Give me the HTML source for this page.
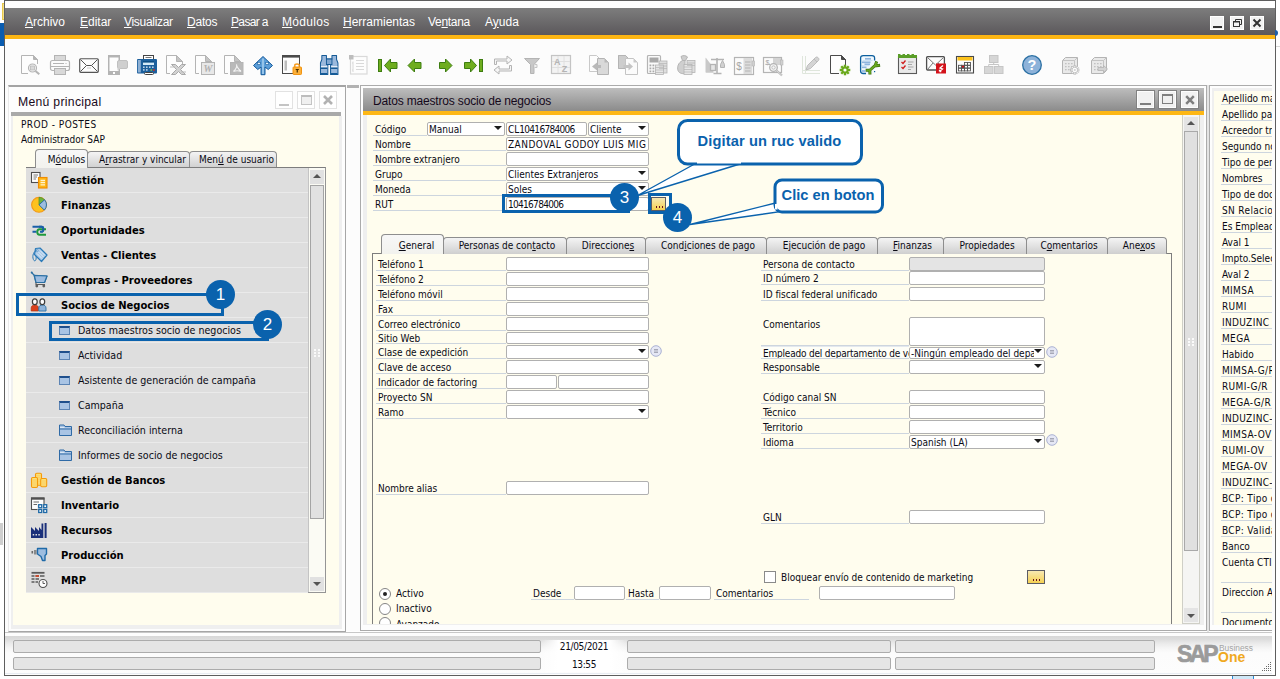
<!DOCTYPE html>
<html lang="es"><head><meta charset="utf-8"><title>SAP Business One</title>
<style>
html,body{margin:0;padding:0}
body{width:1280px;height:679px;overflow:hidden;background:#fff;position:relative;font-family:"DejaVu Sans Condensed","Liberation Sans",sans-serif;font-size:10px;color:#000}
div,span{box-sizing:border-box}
.a{position:absolute}
.t{position:absolute;white-space:nowrap;font-size:10px;line-height:12px;color:#0a0a14}
.lb{position:absolute;white-space:nowrap;font-size:10px;line-height:15px;height:14px;border-bottom:1px solid #cdd5de;padding-left:2px;color:#0a0a14;overflow:hidden}
.in{position:absolute;background:#fff;border:1px solid #b0b0b0;border-radius:2px;height:13px;font-size:10px;line-height:13px;padding-left:1px;white-space:nowrap;overflow:hidden;color:#0a0a14}
.in.g{background:#e4e4e4}
.dd:after{content:"";position:absolute;right:2px;top:3px;border-left:4px solid transparent;border-right:4px solid transparent;border-top:4.5px solid #1c1c1c}
.n{letter-spacing:-0.7px}
.c{letter-spacing:0.45px}
.u{text-decoration:underline}
/* main frame */
#menubar{left:5px;top:8px;width:1270px;height:27px;background:linear-gradient(#7d7d7d,#5b585b)}
#menubar span{position:absolute;top:7px;color:#fff;font-family:"Liberation Sans",sans-serif;font-size:12px;line-height:14px;white-space:nowrap}
#gold{left:5px;top:35px;width:1270px;height:4px;background:#fbb514}
#tool{left:5px;top:39px;width:1270px;height:46px;background:#fcfcfc}
.wb{position:absolute;top:16px;width:14px;height:14px;background:#f2f2f2;border:1px solid #fff}
.wt{position:absolute;top:91px;width:18px;height:18px;background:#fff;border:1px solid #e2e2e2}
.wd{position:absolute;top:90px;width:19px;height:19px;background:#f1f1f1;border:1px solid #818181;box-shadow:inset 0 0 0 1px #fdfdfd}
/* menu list */
.row{position:absolute;left:26px;width:282px;height:25px;background:#dedede;border-bottom:1px solid #eaeaea}
.rt{position:absolute;left:35px;top:6px;font-family:"DejaVu Sans","Liberation Sans",sans-serif;font-weight:bold;font-size:10px;line-height:13px;white-space:nowrap;color:#000}
.st{position:absolute;left:52px;top:6px;font-size:10.6px;line-height:13px;white-space:nowrap;color:#0a0a14}
.si{position:absolute;left:33px;top:8px;width:11px;height:9px;background:#a9c4e4;border:1px solid #5c84b4;border-top:2px solid #1f4f8c}
.sf{position:absolute;left:33px;top:6px;width:13px;height:12px}
.tab{position:absolute;top:237px;height:17px;border:1px solid #8e8e8e;border-bottom:none;border-radius:4px 4px 0 0;background:linear-gradient(#f4f4f4,#cfcfcf);font-size:10px;line-height:15px;padding-left:4px;text-align:center;white-space:nowrap;color:#0a0a14}
.tab.on{top:234px;height:20px;background:linear-gradient(#f7f7f7,#f2f2ee);line-height:22px;padding-left:8px;z-index:2}
.rp{position:absolute;left:1220px;width:52px;height:14px;border-bottom:1px solid #cdd5de;font-size:10px;line-height:15px;padding-left:1px;white-space:nowrap;overflow:hidden;color:#0a0a14}
.sb{position:absolute;height:13px;background:#e5e5e5;border:1px solid #acacac;border-radius:2px}
.circ{position:absolute;width:29px;height:29px;border-radius:50%;background:#0a62ad;color:#fff;font-size:17px;line-height:29px;text-align:center;font-family:"Liberation Sans",sans-serif}
.hb{position:absolute;border:3px solid #0a62ad}
.ybtn{background:linear-gradient(#f7e8b2,#f6d152);border:1px solid #5c5c64}
.ybtn i{position:absolute;left:5px;top:7.5px;width:1.400px;height:2px;background:#6a0f1c;box-shadow:3px 0 0 #6a0f1c,6px 0 0 #6a0f1c}
.dd2:after{top:1px}

</style></head>
<body>
<!-- frame.html -->
<!-- outer window frame -->
<div class="a" style="left:4px;top:0;width:1272px;height:676px;border:1px solid #5e5e5e;background:#fff"></div>
<div class="a" style="left:2px;top:3px;width:2px;height:17px;background:#f4e08a;border:1px solid #e8c84a;border-right:none"></div>
<div class="a" style="left:0;top:23px;width:4px;height:23px;background:#0a5cb0"></div>
<div class="a" style="left:0;top:523px;width:3px;height:22px;background:#cecece"></div>
<div class="a" style="left:1276px;top:46px;width:4px;height:1px;background:#d8d8d8"></div>
<div class="a" style="left:1275px;top:30px;width:3px;height:6px;background:#1f5fa8;border-radius:0 3px 3px 0;z-index:3"></div>
<div class="a" style="left:1232px;top:676px;width:22px;height:4px;background:#cfe8f8;border:1px solid #2a8ad4;border-top:none"></div>
<div class="a" id="menubar">
<span style="left:20px"><span class="u" style="position:static">A</span>rchivo</span>
<span style="left:75px"><span class="u" style="position:static">E</span>ditar</span>
<span style="left:119px;letter-spacing:-0.3px"><span class="u" style="position:static">V</span>isualizar</span>
<span style="left:182px;letter-spacing:-0.2px"><span class="u" style="position:static">D</span>atos</span>
<span style="left:226px;letter-spacing:-0.65px"><span class="u" style="position:static">P</span>asar a</span>
<span style="left:277px;letter-spacing:0.3px"><span class="u" style="position:static">M</span>ódulos</span>
<span style="left:338px"><span class="u" style="position:static">H</span>erramientas</span>
<span style="left:423px;letter-spacing:-0.3px">Ve<span class="u" style="position:static">n</span>tana</span>
<span style="left:480px">A<span class="u" style="position:static">y</span>uda</span>
</div>
<div class="a" id="gold"></div>
<div class="a" id="tool"></div>
<!-- main window controls -->
<div class="wb" style="left:1210px"><div class="a" style="left:2px;top:9px;width:9px;height:2px;background:#333"></div></div>
<div class="wb" style="left:1230px"><svg class="a" style="left:0;top:0" width="12" height="12" viewBox="0 0 12 12"><path d="M4.5 4.5V2.5H10.5V7.5H8.5" fill="none" stroke="#333" stroke-width="1"/><rect x="2.5" y="4.5" width="6" height="5" fill="none" stroke="#333" stroke-width="1"/><path d="M2 5H9" stroke="#333" stroke-width="1"/></svg></div>
<div class="wb" style="left:1250px"><svg class="a" style="left:0;top:0" width="12" height="12" viewBox="0 0 12 12"><path d="M2.5 2.5L9.5 9.5M9.5 2.5L2.5 9.5" stroke="#333" stroke-width="2"/></svg></div>
<!-- workspace -->
<div class="a" style="left:5px;top:85px;width:1270px;height:546px;background:#fcfcfc"></div>
<!-- toolbar.html -->
<svg class="a" style="left:0;top:39px" width="1280" height="46" viewBox="0 39 1280 46">
<g transform="translate(21,55)"><path d="M0.5 18.5V0.5H12.5L16.5 4.5V9" fill="#fdfdfd" stroke="#b4b4b4"/><path d="M0.5 18.5H7" fill="none" stroke="#b4b4b4"/><path d="M12.5 0.5V4.5H16.5Z" fill="#b4b4b4" stroke="#b4b4b4"/><circle cx="11.5" cy="13" r="4" fill="#f4f4f4" stroke="#b4b4b4" stroke-width="1.2"/><rect x="9.5" y="11" width="4" height="4" fill="#d9d9d9" stroke="#b4b4b4" stroke-width="0.7"/><path d="M14.5 16L18.3 19.3" stroke="#b4b4b4" stroke-width="2"/></g>
<g transform="translate(50,55)"><rect x="4.5" y="0.5" width="11" height="6" fill="#d9d9d9" stroke="#b4b4b4"/><rect x="0.5" y="5.5" width="19" height="10" rx="2" fill="#fbfbfb" stroke="#b4b4b4" stroke-width="1.2"/><path d="M3 8.5H14M15.5 8.5H16.5M1 11.5H19" stroke="#b4b4b4"/><rect x="4.5" y="13.5" width="11" height="6" fill="#d9d9d9" stroke="#b4b4b4"/></g>
<g transform="translate(79,55)"><rect x="0.7" y="3.7" width="18.6" height="13.6" rx="1" fill="#fdfdfd" stroke="#555" stroke-width="1.15"/><path d="M1.5 4.5L7.5 10.5L1.5 16.5M18.5 4.5L12.5 10.5L18.5 16.5M7.5 10.5H12.5" fill="none" stroke="#555" stroke-width="1"/><path d="M8 13H12" stroke="#ccc"/></g>
<g transform="translate(108,55)"><rect x="0" y="0" width="12" height="20" fill="#b4b4b4"/><rect x="1.5" y="2.5" width="9" height="13.5" fill="#fdfdfd"/><rect x="5" y="17" width="2" height="2" fill="#fff"/><rect x="9.5" y="5.5" width="10" height="8" rx="1.5" fill="#cfcfcf" stroke="#c0c0c0"/><path d="M9.5 12V15.5L12.5 13.5Z" fill="#cfcfcf"/></g>
<g transform="translate(137,55)"><rect x="6.5" y="0.5" width="10" height="5" fill="#fff" stroke="#444"/><path d="M8.5 2.5H14.5" stroke="#777"/><rect x="0" y="4" width="20" height="14.5" rx="1" fill="#1c5f9c"/><rect x="0.8" y="5" width="3" height="12.5" fill="#8eb0d4"/><rect x="6" y="6" width="11" height="4" fill="#d4eaf7"/><rect x="6" y="6" width="11" height="1.6" fill="#0d4f86"/><g fill="#cfe2f2"><rect x="6" y="11.5" width="1.6" height="1.4"/><rect x="9" y="11.5" width="1.6" height="1.4"/><rect x="12" y="11.5" width="1.6" height="1.4"/><rect x="15" y="11.5" width="1.6" height="1.4"/><rect x="6" y="14.2" width="1.6" height="1.4"/><rect x="9" y="14.2" width="1.6" height="1.4"/></g><rect x="13.5" y="14.2" width="1.6" height="1.6" fill="#7ac143"/><rect x="16" y="14.2" width="1.6" height="1.6" fill="#e2231a"/><rect x="7.5" y="17.5" width="9" height="2" rx="1" fill="#fff" stroke="#444"/></g>
<g transform="translate(166,55)"><path d="M0.5 18.5V0.5H10.5L16.5 6.5V9" fill="#fdfdfd" stroke="#b4b4b4"/><path d="M0.5 18.5H4" fill="none" stroke="#b4b4b4"/><path d="M10.5 0.5V6.5H16.5Z" fill="#c4c4c4" stroke="#b4b4b4"/><path d="M5.5 9.5H9.5L12.5 12.5L15.5 9.5H19.5L14.5 14.5L19.5 19.5H15.5L12.5 16.5L9.5 19.5H5.5L10.5 14.5Z" fill="#d2d2d2" stroke="#a8a8a8"/><path d="M4 12H9M15 17H20" stroke="#bdbdbd"/></g>
<g transform="translate(195,55)"><path d="M0.5 18.5V0.5H10.5L16.5 6.5V9" fill="#fdfdfd" stroke="#b4b4b4"/><path d="M0.5 18.5H4" fill="none" stroke="#b4b4b4"/><path d="M10.5 0.5V6.5H16.5Z" fill="#c4c4c4" stroke="#b4b4b4"/><rect x="6.5" y="7.5" width="13" height="12" fill="#e8e8e8" stroke="#b4b4b4"/><text x="13" y="17" font-family="Liberation Serif,serif" font-style="italic" font-weight="bold" font-size="10" text-anchor="middle" fill="#b0b0b0">W</text></g>
<g transform="translate(224,55)"><path d="M0.5 18.5V0.5H10.5L16.5 6.5V9" fill="#fdfdfd" stroke="#b4b4b4"/><path d="M0.5 18.5H4" fill="none" stroke="#b4b4b4"/><path d="M10.5 0.5V6.5H16.5Z" fill="#c4c4c4" stroke="#b4b4b4"/><rect x="6.5" y="7.5" width="12.5" height="12" fill="#b9b9b9" stroke="#b4b4b4"/><path d="M12.5 9.5C13.5 12 12 14 9.5 16.5C12 15.5 14.5 15.5 17 16.5C14.5 14 12.5 12 12.5 9.5Z" fill="none" stroke="#f2f2f2" stroke-width="1.1"/></g>
<g transform="translate(253,56)"><path d="M10 0.500L19.500 9.500L15.200 13.500L12 11V18.700H8V11L4.800 13.500L0.500 9.500Z" fill="#5c9ed8" stroke="#145a9c" stroke-width="1" stroke-linejoin="round"/><path d="M10 2.500V18" stroke="#b5d8f3" stroke-width="1.300"/><rect x="4.300" y="6.300" width="3" height="2.200" fill="#eaf4fc" stroke="#145a9c" stroke-width="0.600"/><rect x="12.700" y="6.300" width="3" height="2.200" fill="#eaf4fc" stroke="#145a9c" stroke-width="0.600"/></g>
<g transform="translate(282,55)"><rect x="0.5" y="0.5" width="17" height="18" fill="#fdfdfd" stroke="#4a4a4a" stroke-width="1"/><rect x="0" y="0" width="18" height="2.6" fill="#4a4a4a"/><rect x="2.5" y="5.5" width="2.5" height="10" fill="#bdbdbd"/><path d="M12.8 12V10.2C12.8 8.6 17.2 8.6 17.2 10.2V12" fill="none" stroke="#f59a1b" stroke-width="1.4"/><rect x="11" y="12" width="8.5" height="7.5" rx="0.8" fill="#fbb03b" stroke="#f08c00" stroke-width="0.9"/><path d="M13.7 14.5H16.8M15.25 14.5V17.5" stroke="#4a3000" stroke-width="1.2"/></g>
<g transform="translate(320,55)"><g transform="scale(0.92,1)"><path d="M2 0.5H7V4H13V0.5H18V4.5L19.5 8V19.5H11.5V9.5H8.5V19.5H0.5V8L2 4.5Z" fill="#9bb9dc" stroke="#155a96" stroke-width="1.1" stroke-linejoin="round"/><rect x="7" y="4" width="6" height="5.5" fill="#7fa6d0" stroke="#155a96"/><path d="M1 11.8H8M12 11.8H19" stroke="#fff" stroke-width="1.2"/><path d="M1 13.3H8M12 13.3H19" stroke="#155a96" stroke-width="1.4"/><path d="M1 18.7H8M12 18.7H19" stroke="#155a96" stroke-width="1.6"/></g></g>
<g transform="translate(349,55)"><rect x="1.5" y="1.5" width="16.5" height="17.5" fill="#fdfdfd" stroke="#d9d9d9" stroke-width="1.2"/><rect x="0" y="0" width="4.5" height="4.5" fill="#bdbdbd"/><path d="M4 6.5V17M3 8H4M3 15H4" stroke="#d9d9d9"/><path d="M7 5.5H15M7 8.5H15M7 11.5H15M7 14.5H15" stroke="#d9d9d9" stroke-width="1"/></g>
<g transform="translate(378,55)"><rect x="0.5" y="4.5" width="3" height="12" fill="#6fad1f" stroke="#3d7d10"/><path d="M6.5 10.5L12.5 4V7.5H19V13.5H12.5V17Z" fill="#6fad1f" stroke="#3d7d10" stroke-linejoin="round"/></g>
<g transform="translate(407,55)"><path d="M1 10.5L7.5 4V7.5H14V13.5H7.5V17Z" fill="#6fad1f" stroke="#3d7d10" stroke-linejoin="round"/></g>
<g transform="translate(439,55)"><path d="M13 10.5L6.5 4V7.5H0.5V13.5H6.5V17Z" fill="#6fad1f" stroke="#3d7d10" stroke-linejoin="round"/></g>
<g transform="translate(464,55)"><path d="M12.5 10.5L6.5 4V7.5H0.5V13.5H6.5V17Z" fill="#6fad1f" stroke="#3d7d10" stroke-linejoin="round"/><rect x="15.5" y="4.5" width="3" height="12" fill="#6fad1f" stroke="#3d7d10"/></g>
<g transform="translate(493,55)"><path d="M1.5 9.5V4H14V1L19 5L14 9V6H3.5V9.5Z" fill="#f6f6f6" stroke="#b4b4b4" stroke-linejoin="round"/><path d="M18.5 10.5V16H6V19L1 15L6 11V14H16.5V10.5Z" fill="#f6f6f6" stroke="#b4b4b4" stroke-linejoin="round"/></g>
<g transform="translate(524,55)"><path d="M0.5 3.5H15.5L10 9.5V18.5H6.5V9.5Z" fill="#c8c8c8" stroke="#b4b4b4" stroke-linejoin="round"/><path d="M10.5 9.5H13V12.5H10.5" fill="#f0f0f0" stroke="#c4c4c4"/></g>
<g transform="translate(551,55)"><rect x="0.5" y="0.5" width="19" height="18" fill="#f3f3f3" stroke="#c4c4c4" stroke-width="1.2"/><path d="M1 6.5H19M1 12.5H19M7 1V18M13 1V18" stroke="#e0e0e0"/><text x="6.3" y="9.6" font-family="Liberation Sans,sans-serif" font-weight="bold" font-size="9" text-anchor="middle" fill="#b4b4b4">A</text><text x="13.5" y="17" font-family="Liberation Sans,sans-serif" font-weight="bold" font-size="9" text-anchor="middle" fill="#b4b4b4">Z</text></g>
<g transform="translate(589,55)"><path d="M0.5 16.5V0.5H7.5L10 3" fill="#fdfdfd" stroke="#c9c9c9"/><path d="M0.5 16.5H8" stroke="#c9c9c9" fill="none"/><path d="M8.5 19.5V3.5H15.5L19.5 7.5V19.5Z" fill="#d9d9d9" stroke="#b4b4b4"/><path d="M15.5 3.5V7.5H19.5Z" fill="#b9b9b9"/><path d="M3 11.5L8 7.5V10H12V13H8V15.5Z" fill="#b9b9b9"/></g>
<g transform="translate(618,55)"><path d="M0.5 13.5V0.5H7.5L10.5 3.5" fill="#d0d0d0" stroke="#b4b4b4"/><path d="M0.5 0.5H7.5L10 3V13.5H0.5Z" fill="#cdcdcd" stroke="#b4b4b4"/><path d="M7.5 19.5V3.5H15.5L19.5 7.5V19.5Z" fill="#fbfbfb" stroke="#c4c4c4"/><path d="M15.5 3.5V7.5H19.5Z" fill="#c9c9c9"/><path d="M15 11.5L10.5 7.5V10H5.5V13H10.5V15.5Z" fill="#c4c4c4"/></g>
<g transform="translate(647,55)"><rect x="0.5" y="0.5" width="13" height="18" rx="1" fill="#fbfbfb" stroke="#b4b4b4" stroke-width="1.2"/><rect x="2.5" y="2.5" width="9" height="5" fill="#a9a9a9"/><g fill="#a9a9a9"><rect x="2.5" y="9.5" width="1.8" height="1.8"/><rect x="5.5" y="9.5" width="1.8" height="1.8"/><rect x="2.5" y="12.5" width="1.8" height="1.8"/><rect x="5.5" y="12.5" width="1.8" height="1.8"/><rect x="2.5" y="15.5" width="1.8" height="1.8"/><rect x="5.5" y="15.5" width="1.8" height="1.8"/></g><rect x="12" y="6" width="8" height="12" fill="#dedede" stroke="#b4b4b4" stroke-width="0.8"/><rect x="8.5" y="10" width="8" height="9.5" fill="#e6e6e6" stroke="#b4b4b4" stroke-width="0.8"/><path d="M12 8.5H20M12 11H20M12 13.5H20M8.5 12.5H16.5M8.5 15H16.5M8.5 17.5H16.5" stroke="#b4b4b4" stroke-width="0.7"/></g>
<g transform="translate(677,55)"><path d="M4 1.5C6 0 9 0.5 10.5 2L8.5 5.5H5.5Z" fill="#cfcfcf" stroke="#b4b4b4"/><path d="M5.5 5.5C1 8 0 12 1 15.5C2 18.5 6 19 8 18.5V5.5Z" fill="#cfcfcf" stroke="#b4b4b4"/><rect x="10" y="5.500" width="8" height="12" fill="#dedede" stroke="#b4b4b4" stroke-width="0.8"/><rect x="7" y="9.5" width="8" height="10" fill="#e6e6e6" stroke="#b4b4b4" stroke-width="0.8"/><path d="M10 8H18M10 10.500H18M7 12H15M7 14.500H15M7 17H15" stroke="#b4b4b4" stroke-width="0.7"/></g>
<g transform="translate(705,55)"><path d="M0.500 2.500V17.500H9L0.500 2.500Z" fill="#c9c9c9"/><path d="M1 3L8 12V17.500H1Z" fill="#c9c9c9"/><path d="M12 3V18M8.500 18.500H16.500M6 4.500H19" stroke="#b4b4b4" stroke-width="1.600" fill="none"/><rect x="5.500" y="9.500" width="5" height="6" fill="#e6e6e6" stroke="#b4b4b4" stroke-width="1.300"/><path d="M15.500 9.500L17.500 5.500L19.500 9.500V12.500H15.500Z" fill="#d0d0d0" stroke="#b4b4b4"/></g>
<g transform="translate(734,56)"><rect x="0.500" y="1.500" width="19" height="17" fill="#fbfbfb" stroke="#b4b4b4" stroke-width="1.200"/><rect x="9.500" y="2" width="8.500" height="16" fill="#dcdcdc"/><rect x="18" y="5" width="2.500" height="5" fill="#d0d0d0" stroke="#b4b4b4" stroke-width="0.600"/><path d="M11 6H16.500M11 9H16.500M11 12H16.500M11 15H16.500" stroke="#b4b4b4"/><text x="5" y="13.500" font-family="Liberation Sans,sans-serif" font-size="10" text-anchor="middle" fill="#a4a4a4">$</text></g>
<g transform="translate(763,56)"><rect x="0.500" y="1.500" width="18" height="15" fill="#fbfbfb" stroke="#b4b4b4" stroke-width="1.200"/><rect x="10" y="2" width="8" height="7" fill="#d4d4d4"/><rect x="17.500" y="4" width="2.500" height="5" fill="#d0d0d0" stroke="#b4b4b4" stroke-width="0.600"/><text x="4.500" y="9" font-family="Liberation Sans,sans-serif" font-size="7" text-anchor="middle" fill="#a4a4a4">$</text><path d="M2.500 8.500H7" stroke="#b4b4b4"/><circle cx="10.500" cy="11.500" r="3.800" fill="#f6f6f6" stroke="#b4b4b4" stroke-width="1.300"/><circle cx="10.500" cy="11.500" r="1.700" fill="none" stroke="#b4b4b4" stroke-width="0.800"/><path d="M13.500 14.500L19 19.500" stroke="#b4b4b4" stroke-width="2"/><path d="M13.500 14.500L19 19.500" stroke="#f0f0f0" stroke-width="0.600"/></g>
<g transform="translate(802,55)"><path d="M0.500 1V18.500H18M3.500 1V18.500M0.500 15.500H18" stroke="#dfe6dc" fill="none"/><path d="M4 15L5.500 10.500L13.500 2.500C15 1 18 3.500 16.500 5.500L8.500 13.500Z" fill="#d4d4d4" stroke="#bdbdbd" stroke-linejoin="round"/><path d="M12 4L15 7" stroke="#bdbdbd"/></g>
<g transform="translate(830,55)"><path d="M0.500 18.500V0.500H11.500L15.500 4.500V10" fill="#fdfdfd" stroke="#4a4a4a"/><path d="M0.500 18.500H9" stroke="#4a4a4a" fill="none"/><path d="M11.500 0.500V4.500H15.500Z" fill="#4a4a4a" stroke="#4a4a4a"/><g transform="translate(15,15)"><rect x="-1.200" y="-5.300" width="2.400" height="10.600" fill="#6aa91c" transform="rotate(0)"/><rect x="-1.200" y="-5.300" width="2.400" height="10.600" fill="#6aa91c" transform="rotate(45)"/><rect x="-1.200" y="-5.300" width="2.400" height="10.600" fill="#6aa91c" transform="rotate(90)"/><rect x="-1.200" y="-5.300" width="2.400" height="10.600" fill="#6aa91c" transform="rotate(135)"/><circle r="3.600" fill="#6aa91c"/><circle r="1.600" fill="#fdfdfd"/></g></g>
<g transform="translate(860,55)"><path d="M0.600 3.200Q0.600 0.600 3.200 0.600H12Q14.600 0.600 14.600 3.200V17.500Q14.600 18.500 13 18.500H3.200Q0.600 18.500 0.600 16Z" fill="#f1f8fd"/><g stroke="#8fb5de" stroke-width="1.700"><path d="M5 3.800H11"/><path d="M2 7.300H10.500"/><path d="M4.500 9.300H10"/><path d="M2 12.300H6.500"/><path d="M2 16H5.500"/></g><path d="M2.500 5.500H12.500M1.500 10.700H9" stroke="#cfe3f5" stroke-width="1.200"/><path d="M14.600 5.500V3.200Q14.600 0.600 12 0.600H3.200Q0.600 0.600 0.600 3.200V16Q0.600 18.500 3.200 18.500H6" fill="none" stroke="#0d5f9e" stroke-width="1.300"/><path d="M9.500 15.500L15.500 10.200M15.200 10.500L16.200 7.800M15.600 10.800L18.600 10.400M9.800 15.200L7.200 15.300M9.800 15.600L9.900 18" fill="none" stroke="#3d7010" stroke-width="3" stroke-linecap="square"/><path d="M9.500 15.500L15.500 10.200M15.200 10.500L16.200 7.800M15.600 10.800L18.600 10.400M9.800 15.200L7.200 15.300M9.800 15.600L9.900 18" fill="none" stroke="#69a81e" stroke-width="1.800" stroke-linecap="square"/><rect x="14" y="16" width="1.200" height="1.200" fill="#0d5f9e"/></g>
<g transform="translate(898,54)"><rect x="0.500" y="2.500" width="18" height="17" fill="#e9e9e9" stroke="#5a5a5a" stroke-width="1.100"/><path d="M0 0H2.500V1H4.500V0H7V1H9V0H11.500V1H13.500V0H16V1H19V4H0Z" fill="#5a9e28"/><path d="M3.500 8L5 9.500L7.500 6.500M3.500 13L5 14.500L7.500 11.500" fill="none" stroke="#d01c1c" stroke-width="1.300"/><path d="M10 8H15.500M10 10.500H14M10 13H15.500M10 15.500H13" stroke="#a8a8a8" stroke-width="1.100"/></g>
<g transform="translate(926,55)"><rect x="0.600" y="1.600" width="17.800" height="13.400" rx="1" fill="#fdfdfd" stroke="#4f4f4f" stroke-width="1.300"/><path d="M1.500 2.500L9.500 10L17.500 2.500M1.500 14.500L7 8M17.500 14.500L12 8" fill="none" stroke="#6a6a6a" stroke-width="0.900"/><rect x="10" y="8.500" width="10" height="10" fill="#d3131b"/><path d="M17 10.500L14 13L16.500 14L13.500 16.500M13.500 16.500V14.700M13.500 16.500H15.300" fill="none" stroke="#fff" stroke-width="1.300"/></g>
<g transform="translate(956,55)"><rect x="0.500" y="1.500" width="17" height="16.500" fill="#fdfdfd" stroke="#4a4a4a" stroke-width="1.100"/><rect x="1.500" y="2" width="15" height="3.500" fill="#fcc21c"/><g fill="none" stroke="#555" stroke-width="0.900"><rect x="8.500" y="7.500" width="3" height="2.800"/><rect x="11.500" y="7.500" width="3" height="2.800"/><rect x="2.500" y="10.300" width="3" height="2.800"/><rect x="5.500" y="10.300" width="3" height="2.800" fill="#d3131b"/><rect x="8.500" y="10.300" width="3" height="2.800"/><rect x="11.500" y="10.300" width="3" height="2.800"/><rect x="2.500" y="13.100" width="3" height="2.800"/><rect x="5.500" y="13.100" width="3" height="2.800"/><rect x="8.500" y="13.100" width="3" height="2.800"/><rect x="11.500" y="13.100" width="3" height="2.800"/></g></g>
<g transform="translate(984,55)"><rect x="5.500" y="0.500" width="8.500" height="7" fill="#d6d6d6" stroke="#c6c6c6"/><rect x="0.500" y="11.500" width="8.500" height="7" fill="#d6d6d6" stroke="#c6c6c6"/><rect x="10.500" y="11.500" width="8.500" height="7" fill="#d6d6d6" stroke="#c6c6c6"/><path d="M9.700 7.500V9.500M4.700 11.500V9.500H14.700V11.500" fill="none" stroke="#c6c6c6"/></g>
<g transform="translate(1022,55)"><circle cx="10" cy="10" r="9.300" fill="#8db2d9" stroke="#2a6fa3" stroke-width="1.300"/><text x="10" y="15.200" font-family="Liberation Sans,sans-serif" font-weight="bold" font-size="14.500" text-anchor="middle" fill="#fff">?</text></g>
<g transform="translate(1062,56)"><path d="M0.500 4.500L3.500 1.500H15.500V14.500L12.500 17.500H0.500Z" fill="#e9e9e9" stroke="#b4b4b4" stroke-linejoin="round"/><path d="M0.500 4.500H12.500V17.500M12.500 4.500L15.500 1.500" fill="none" stroke="#c4c4c4"/><g fill="#c2c2c2"><rect x="3" y="7" width="1.600" height="1.300"/><rect x="6" y="7" width="1.600" height="1.300"/><rect x="9" y="7" width="1.600" height="1.300"/><rect x="3" y="10" width="1.600" height="1.300"/><rect x="6" y="10" width="1.600" height="1.300"/><rect x="9" y="10" width="1.600" height="1.300"/><rect x="3" y="13" width="1.600" height="1.300"/><rect x="6" y="13" width="1.600" height="1.300"/></g><g transform="translate(12.800,14)"><rect x="-1" y="-4.200" width="2" height="8.400" fill="#fdfdfd" stroke="#b4b4b4" stroke-width="0.700" transform="rotate(0)"/><rect x="-1" y="-4.200" width="2" height="8.400" fill="#fdfdfd" stroke="#b4b4b4" stroke-width="0.700" transform="rotate(45)"/><rect x="-1" y="-4.200" width="2" height="8.400" fill="#fdfdfd" stroke="#b4b4b4" stroke-width="0.700" transform="rotate(90)"/><rect x="-1" y="-4.200" width="2" height="8.400" fill="#fdfdfd" stroke="#b4b4b4" stroke-width="0.700" transform="rotate(135)"/><circle r="2.800" fill="#fdfdfd" stroke="#b4b4b4" stroke-width="0.700"/><circle r="1.100" fill="#d0d0d0"/></g></g>
<g transform="translate(1091,56)"><path d="M0.500 4.500L3.500 1.500H15.500V14.500L12.500 17.500H0.500Z" fill="#e9e9e9" stroke="#b4b4b4" stroke-linejoin="round"/><path d="M0.500 4.500H12.500V17.500M12.500 4.500L15.500 1.500" fill="none" stroke="#c4c4c4"/><g fill="#c2c2c2"><rect x="3" y="7" width="1.600" height="1.300"/><rect x="6" y="7" width="1.600" height="1.300"/><rect x="9" y="7" width="1.600" height="1.300"/><rect x="3" y="10" width="1.600" height="1.300"/><rect x="6" y="10" width="1.600" height="1.300"/><rect x="9" y="10" width="1.600" height="1.300"/><rect x="3" y="13" width="1.600" height="1.300"/><rect x="6" y="13" width="1.600" height="1.300"/></g><path d="M7 11.500H12.500V9.500L16.500 13L12.500 16.500V14.500H7Z" fill="#d4d4d4" stroke="#b4b4b4" stroke-width="0.800" stroke-linejoin="round"/></g>
</svg>
<!-- menu.html -->
<div class="a" style="left:8px;top:85px;width:338px;height:547px;background:#fdfdfd;border-left:1px solid #e9e9e9;border-right:1px solid #a6a6a6;border-top:2px solid #a4a4a4;border-bottom:1px solid #a6a6a6"></div>
<div class="a" style="left:11px;top:116px;width:331px;height:513px;background:#efefef"></div>
<div class="a" style="left:347px;top:85px;width:12px;height:3px;background:#b2b2b2"></div>
<div class="a" style="left:11px;top:87px;width:330px;height:25px;background:#fdfdfd"></div>
<div class="t" style="left:18px;top:95px;font-family:Liberation Sans,sans-serif;font-size:12.2px;letter-spacing:0.3px;line-height:14px;color:#1a0a1a">Menú principal</div>
<div class="a" style="left:11px;top:112px;width:330px;height:4px;background:#a9a9a9"></div>
<div class="wt" style="left:275px"><div class="a" style="left:3px;top:12px;width:10px;height:2px;background:#c4c4c4"></div></div>
<div class="wt" style="left:297px"><div class="a" style="left:3px;top:3px;width:11px;height:10px;border:1px solid #c4c4c4;border-top:2px solid #bdbdbd;background:#f0f0f0"></div></div>
<div class="wt" style="left:319px"><svg class="a" style="left:3px;top:3px" width="10" height="10" viewBox="0 0 10 10"><path d="M1 1L9 9M9 1L1 9" stroke="#b2b2b2" stroke-width="2.600"/></svg></div>
<div class="a" style="left:13px;top:116px;width:326px;height:509px;background:#fffdee"></div>
<div class="t" style="left:21px;top:119px;letter-spacing:0.45px">PROD - POSTES</div>
<div class="t" style="left:21px;top:134px;">Administrador SAP</div>
<div class="tab" style="left:87px;top:151px;width:103px;height:17px;padding-left:8px;line-height:15px">A<span class="u">r</span>rastrar y vincular</div>
<div class="tab" style="left:189px;top:151px;width:88px;height:17px;padding-left:7px;line-height:15px">Men<span class="u">ú</span> de usuario</div>
<div class="tab on" style="left:35px;top:149px;width:53px;height:19px;line-height:19px;padding-left:10px">M<span class="u">ó</span>dulos</div>
<div class="a" style="left:26px;top:167px;width:300px;height:426px;background:#dedede;border-top:1px solid #7d7d7d;border-right:1px solid #959595;border-bottom:1px solid #959595"></div>
<div class="row" style="top:168px">
<svg class="a" style="left:0;top:0" width="26" height="25" viewBox="0 0 26 25"><rect x="5.500" y="4.500" width="8.500" height="10" fill="#fdfdfd" stroke="#4f4f4f" stroke-width="1.100"/><path d="M7.500 7H12M7.500 9H11M7.500 11H10" stroke="#6a6a6a" stroke-width="0.900"/><rect x="12.500" y="9.500" width="8.500" height="10.500" fill="#fdb515" stroke="#f08c00" stroke-width="1.100"/><path d="M14.500 12.500H19M14.500 14.700H19M14.500 16.900H19" stroke="#fff4cf" stroke-width="1.300"/></svg><div class="rt">Gestión</div>
</div>

<div class="row" style="top:193px">
<svg class="a" style="left:0;top:0" width="26" height="25" viewBox="0 0 26 25"><circle cx="13" cy="11.800" r="7.400" fill="#fdc21e" stroke="#f29a1c" stroke-width="1.100"/><path d="M13 11.800V4.300A7.500 7.500 0 0 1 18.600 6.800Z" fill="#6db33f" stroke="#4c8f2a" stroke-width="0.700"/><path d="M13 11.800L18.600 6.800A7.500 7.500 0 0 1 18.300 17.100Z" fill="#9dbde0" stroke="#2a6fa3" stroke-width="1"/></svg><div class="rt">Finanzas</div>
</div>

<div class="row" style="top:218px">
<svg class="a" style="left:0;top:0" width="26" height="25" viewBox="0 0 26 25"><path d="M6.500 8.700H15.500C18 8.700 18 13.700 15.500 13.700H14M6.500 13.700H10.500" fill="none" stroke="#1a5fa8" stroke-width="1.900"/><path d="M20 11.300H13.500C10.500 11.300 10.500 16.800 13.500 16.800H20" fill="none" stroke="#1f9a3c" stroke-width="1.900"/><path d="M13 8.700H15.500C18 8.700 18 13.700 15.500 13.700" fill="none" stroke="#1a5fa8" stroke-width="1.900"/></svg><div class="rt">Oportunidades</div>
</div>

<div class="row" style="top:243px">
<svg class="a" style="left:0;top:0" width="26" height="25" viewBox="0 0 26 25"><path d="M9.500 5.500L14 5L21 12L15.500 18.500L8.500 11.500Z" fill="#a9c8e6" stroke="#2a7ab8" stroke-width="1.200" stroke-linejoin="round"/><path d="M12.500 9L17.500 14M11 10.500L16 15.500M14 7.500L19 12.500" stroke="#e8f2fb" stroke-width="0.900"/><circle cx="11" cy="7.500" r="1" fill="#fff" stroke="#2a7ab8" stroke-width="0.600"/><path d="M10.500 7.500C6.500 9 6 15 8 17.500C10 19 10.500 15 10 13" fill="none" stroke="#2a7ab8" stroke-width="1"/></svg><div class="rt">Ventas - Clientes</div>
</div>

<div class="row" style="top:268px">
<svg class="a" style="left:0;top:0" width="26" height="25" viewBox="0 0 26 25"><path d="M5.500 4.500L8 7L10 14.500H18.500L21 8L8.300 7.300" fill="#9cbce0" stroke="#2a6fa3" stroke-width="1.200" stroke-linejoin="round"/><path d="M8.300 7.300L21 8L18.500 14.500H10Z" fill="#9cbce0" stroke="#2a6fa3" stroke-width="1.200" stroke-linejoin="round"/><circle cx="5.700" cy="4.500" r="1" fill="#2a6fa3"/><path d="M10 14.500V16.500H19" fill="none" stroke="#5a5a5a" stroke-width="1.100"/><circle cx="10.800" cy="18" r="1.400" fill="#5f5f5f"/><circle cx="17.800" cy="18" r="1.400" fill="#5f5f5f"/></svg><div class="rt">Compras - Proveedores</div>
</div>

<div class="row" style="top:293px">
<svg class="a" style="left:0;top:0" width="26" height="25" viewBox="0 0 26 25"><path d="M5.200 18V15C5.200 12.800 7 12 8.800 12C10.600 12 12.400 12.800 12.400 15V18Z" fill="#d9411e" stroke="#b5300f" stroke-width="0.700"/><path d="M12.800 18V15C12.800 12.800 14.600 12 16.400 12C18.200 12 20 12.800 20 15V18Z" fill="#8fb3d9" stroke="#2a6fa3" stroke-width="0.900"/><ellipse cx="8.800" cy="8.800" rx="2.400" ry="2.900" fill="#fdfdfd" stroke="#3c3c3c" stroke-width="1.200"/><ellipse cx="16.300" cy="8.800" rx="2.400" ry="2.900" fill="#fdfdfd" stroke="#3c3c3c" stroke-width="1.200"/></svg><div class="rt">Socios de Negocios</div>
</div>

<div class="row" style="top:318px">
<div class="si"></div><div class="st">Datos maestros socio de negocios</div>
</div>

<div class="row" style="top:343px">
<div class="si"></div><div class="st">Actividad</div>
</div>

<div class="row" style="top:368px">
<div class="si"></div><div class="st">Asistente de generación de campaña</div>
</div>

<div class="row" style="top:393px">
<div class="si"></div><div class="st">Campaña</div>
</div>

<div class="row" style="top:418px">
<svg class="sf" viewBox="0 0 13 12"><path d="M0.500 1H5L6 2.500H12.500V11.500H0.500Z" fill="#a9c4e4" stroke="#2f6aa6"/><path d="M1 5H12" stroke="#2f6aa6"/><path d="M1 3.500H5.500" stroke="#dbe8f5"/></svg><div class="st">Reconciliación interna</div>
</div>

<div class="row" style="top:443px">
<svg class="sf" viewBox="0 0 13 12"><path d="M0.500 1H5L6 2.500H12.500V11.500H0.500Z" fill="#a9c4e4" stroke="#2f6aa6"/><path d="M1 5H12" stroke="#2f6aa6"/><path d="M1 3.500H5.500" stroke="#dbe8f5"/></svg><div class="st">Informes de socio de negocios</div>
</div>

<div class="row" style="top:468px">
<svg class="a" style="left:0;top:0" width="26" height="25" viewBox="0 0 26 25"><rect x="9.5" y="5.3" width="6" height="12" rx="1.200" fill="#fde272" stroke="#f59a0a" stroke-width="1.100"/><path d="M10.2 7.8H14.8" stroke="#f9c566" stroke-width="0.800"/><path d="M10.2 9.8H14.8" stroke="#f9c566" stroke-width="0.800"/><path d="M10.2 11.8H14.8" stroke="#f9c566" stroke-width="0.800"/><path d="M10.2 13.8H14.8" stroke="#f9c566" stroke-width="0.800"/><path d="M10.2 15.8H14.8" stroke="#f9c566" stroke-width="0.800"/><rect x="5.5" y="9.5" width="6" height="10" rx="1.200" fill="#fde272" stroke="#f59a0a" stroke-width="1.100"/><path d="M6.2 12H10.8" stroke="#f9c566" stroke-width="0.800"/><path d="M6.2 14H10.8" stroke="#f9c566" stroke-width="0.800"/><path d="M6.2 16H10.8" stroke="#f9c566" stroke-width="0.800"/><path d="M6.2 18H10.8" stroke="#f9c566" stroke-width="0.800"/><rect x="14.7" y="10.5" width="6" height="8.2" rx="1.200" fill="#fde272" stroke="#f59a0a" stroke-width="1.100"/><path d="M15.399999999999999 13H20.0" stroke="#f9c566" stroke-width="0.800"/><path d="M15.399999999999999 15H20.0" stroke="#f9c566" stroke-width="0.800"/><path d="M15.399999999999999 17H20.0" stroke="#f9c566" stroke-width="0.800"/></svg><div class="rt">Gestión de Bancos</div>
</div>

<div class="row" style="top:493px">
<svg class="a" style="left:0;top:0" width="26" height="25" viewBox="0 0 26 25"><rect x="5.500" y="5" width="12.500" height="11.500" fill="#fdfdfd" stroke="#4f4f4f" stroke-width="1.100"/><rect x="5" y="4.500" width="13.500" height="2.200" fill="#4f4f4f"/><path d="M7.500 9H13M7.500 11.500H11" stroke="#6a6a6a" stroke-width="1"/><rect x="11.500" y="11" width="10" height="9.500" fill="#dedede"/><g fill="#fdfdfd" stroke="#1f6aa8" stroke-width="1.300"><rect x="12.700" y="11.700" width="3" height="3"/><rect x="17.700" y="11.700" width="3" height="3"/><rect x="12.700" y="16.500" width="3" height="3"/><rect x="17.700" y="16.500" width="3" height="3"/></g></svg><div class="rt">Inventario</div>
</div>

<div class="row" style="top:518px">
<svg class="a" style="left:0;top:0" width="26" height="25" viewBox="0 0 26 25"><path d="M5 20V9L9 13V9L13 13V9L15.500 12V5.500H17.300V20Z" fill="#1a2f7a"/><rect x="18.600" y="5" width="2" height="15" fill="#1a2f7a"/><g fill="#dedede"><rect x="6.700" y="16" width="1.500" height="1.500"/><rect x="9.500" y="16" width="1.500" height="1.500"/><rect x="12.300" y="16" width="1.500" height="1.500"/></g></svg><div class="rt">Recursos</div>
</div>

<div class="row" style="top:543px">
<svg class="a" style="left:0;top:0" width="26" height="25" viewBox="0 0 26 25"><rect x="5.500" y="8" width="1.600" height="2.500" fill="#6a6a6a"/><rect x="8" y="7" width="2.600" height="4.500" fill="#8a8a8a"/><path d="M11.500 5.500H20.500V11L19 12.500V17.500H16.500L15 13.500L11.500 11Z" fill="#9dbde0" stroke="#1f6aa8" stroke-width="1.400" stroke-linejoin="round"/></svg><div class="rt">Producción</div>
</div>

<div class="row" style="top:568px">
<svg class="a" style="left:0;top:0" width="26" height="25" viewBox="0 0 26 25"><path d="M5.500 4.800H18.500" stroke="#5a5a5a" stroke-width="1.800"/><path d="M5.500 8H8.500M9.500 8H13M14 8H18.500M5.500 11H8.500M9.500 11H13M5.500 14H8.500M9.500 14H12" stroke="#5a5a5a" stroke-width="1.500"/><path d="M9.500 8H13" stroke="#d9411e" stroke-width="1.600"/><circle cx="17" cy="15.500" r="4" fill="#fdfdfd" stroke="#4f4f4f" stroke-width="1.100"/><path d="M17 13V15.500H19" fill="none" stroke="#4f4f4f" stroke-width="0.900"/></svg><div class="rt">MRP</div>
</div>

<div class="a" style="left:308px;top:168px;width:17px;height:424px;background:#fbfbf4;border-left:1px solid #c4c4c4"></div>
<div class="a" style="left:310px;top:170px;width:14px;height:14px;background:#e1e1e1"><div class="a" style="left:2.500px;top:4px;border-left:4.500px solid transparent;border-right:4.500px solid transparent;border-bottom:4.500px solid #555"></div></div>
<div class="a" style="left:310px;top:185px;width:14px;height:334px;background:#e1e1e1;border:1px solid #a4a4a4"></div>
<div class="a" style="left:310px;top:577px;width:14px;height:14px;background:#e1e1e1"><div class="a" style="left:2.500px;top:5px;border-left:4.500px solid transparent;border-right:4.500px solid transparent;border-top:4.500px solid #555"></div></div>
<svg class="a" style="left:313px;top:348px" width="8" height="10" viewBox="0 0 8 10"><g fill="#fafafa"><rect x="1" y="1" width="2" height="2"/><rect x="5" y="1" width="2" height="2"/><rect x="1" y="4" width="2" height="2"/><rect x="5" y="4" width="2" height="2"/><rect x="1" y="7" width="2" height="2"/><rect x="5" y="7" width="2" height="2"/></g></svg>
<!-- datos.html -->
<div class="a" style="left:360px;top:85px;width:847px;height:546px;background:#fdfdfd;border:1px solid #ababab"></div>
<div class="a" style="left:363px;top:88px;width:841px;height:537px;background:#efefef"></div>
<div class="a" style="left:363px;top:88px;width:841px;height:23px;background:linear-gradient(#bdbdbd,#8b8b8b)"></div>
<div class="a" style="left:363px;top:111px;width:841px;height:4px;background:#fdb714"></div>
<div class="t" style="left:373px;top:94px;font-family:Liberation Sans,sans-serif;font-size:12px;line-height:14px;letter-spacing:-0.17px;color:#14081a">Datos maestros socio de negocios</div>
<div class="wd" style="left:1136px"><div class="a" style="left:3px;top:12px;width:11px;height:2px;background:#7e7e7e"></div></div>
<div class="wd" style="left:1158px"><div class="a" style="left:3px;top:3px;width:11px;height:10px;border:1px solid #7e7e7e;border-top:2px solid #7e7e7e;background:#efefef"></div></div>
<div class="wd" style="left:1180px"><svg class="a" style="left:3.500px;top:3.500px" width="10" height="10" viewBox="0 0 10 10"><path d="M1.200 1.200L8.800 8.800M8.800 1.200L1.200 8.800" stroke="#7e7e7e" stroke-width="2.500"/></svg></div>
<div class="a" id="dbody" style="left:367px;top:115px;width:816px;height:509px;background:#fffdee;overflow:hidden">
<div class="lb" style="left:6px;top:7px;width:54px;padding-left:2px">Código</div>
<div class="in dd" style="left:60px;top:7px;width:78px;height:14px;">Manual</div>
<div class="in " style="left:139px;top:7px;width:81px;height:14px;">CL<span class="n">10416784006</span></div>
<div class="in dd" style="left:221px;top:7px;width:61px;height:14px;">Cliente</div>
<div class="lb" style="left:6px;top:22px;width:133px;padding-left:2px">Nombre</div>
<div class="in " style="left:139px;top:22px;width:143px;height:14px;"><span class="c">ZANDOVAL GODOY LUIS MIG</span></div>
<div class="lb" style="left:6px;top:37px;width:133px;padding-left:2px">Nombre extranjero</div>
<div class="in " style="left:139px;top:37px;width:143px;height:14px;"></div>
<div class="lb" style="left:6px;top:52px;width:133px;padding-left:2px">Grupo</div>
<div class="in dd" style="left:139px;top:52px;width:143px;height:14px;">Clientes Extranjeros</div>
<div class="lb" style="left:6px;top:67px;width:133px;padding-left:2px">Moneda</div>
<div class="in dd" style="left:139px;top:67px;width:143px;height:14px;">Soles</div>
<div class="lb" style="left:6px;top:82px;width:133px;padding-left:2px">RUT</div>
<div class="in " style="left:139px;top:82px;width:143px;height:14px;"><span class="n">10416784006</span></div>
<div class="a" style="left:5px;top:138px;width:800px;height:400px;border:1px solid #7d7d7d"></div>
<div class="tab on" style="left:14px;top:119px;width:63px"><span class="u">G</span>eneral</div>
<div class="tab" style="left:76px;top:122px;width:124px">Personas de con<span class="u">t</span>acto</div>
<div class="tab" style="left:199px;top:122px;width:80px">Direccione<span class="u">s</span></div>
<div class="tab" style="left:278px;top:122px;width:122px">Cond<span class="u">i</span>ciones de pago</div>
<div class="tab" style="left:399px;top:122px;width:112px">E<span class="u">j</span>ecución de pago</div>
<div class="tab" style="left:510px;top:122px;width:67px"><span class="u">F</span>inanzas</div>
<div class="tab" style="left:576px;top:122px;width:84px">Propiedades</div>
<div class="tab" style="left:659px;top:122px;width:82px">C<span class="u">o</span>mentarios</div>
<div class="tab" style="left:740px;top:122px;width:60px">Ane<span class="u">x</span>os</div>
<div class="lb" style="left:9px;top:142px;width:130px;">Teléfono 1</div>
<div class="in " style="left:139px;top:142px;width:143px;height:14px;"></div>
<div class="lb" style="left:9px;top:157px;width:130px;">Teléfono 2</div>
<div class="in " style="left:139px;top:157px;width:143px;height:14px;"></div>
<div class="lb" style="left:9px;top:172px;width:130px;">Teléfono móvil</div>
<div class="in " style="left:139px;top:172px;width:143px;height:14px;"></div>
<div class="lb" style="left:9px;top:187px;width:130px;">Fax</div>
<div class="in " style="left:139px;top:187px;width:143px;height:14px;"></div>
<div class="lb" style="left:9px;top:202px;width:130px;">Correo electrónico</div>
<div class="in " style="left:139px;top:202px;width:143px;height:14px;"></div>
<div class="lb" style="left:9px;top:217px;width:130px;height:12px;line-height:14px">Sitio Web</div>
<div class="in " style="left:139px;top:217px;width:143px;height:12px;"></div>
<div class="lb" style="left:9px;top:230px;width:130px;">Clase de expedición</div>
<div class="in dd" style="left:139px;top:230px;width:143px;height:14px;"></div>
<div class="lb" style="left:9px;top:245px;width:130px;">Clave de acceso</div>
<div class="in " style="left:139px;top:245px;width:143px;height:14px;"></div>
<div class="lb" style="left:9px;top:260px;width:130px;">Indicador de factoring</div>
<div class="in " style="left:139px;top:260px;width:51px;height:14px;"></div>
<div class="in " style="left:191px;top:260px;width:91px;height:14px;"></div>
<div class="lb" style="left:9px;top:275px;width:130px;">Proyecto SN</div>
<div class="in " style="left:139px;top:275px;width:143px;height:14px;"></div>
<div class="lb" style="left:9px;top:290px;width:130px;">Ramo</div>
<div class="in dd" style="left:139px;top:290px;width:143px;height:14px;"></div>
<div class="lb" style="left:9px;top:366px;width:130px;">Nombre alias</div>
<div class="in " style="left:139px;top:366px;width:143px;height:14px;"></div>
<div class="lb" style="left:394px;top:142px;width:148px;">Persona de contacto</div>
<div class="in g" style="left:542px;top:142px;width:136px;height:14px;"></div>
<div class="lb" style="left:394px;top:156px;width:148px;">ID número 2</div>
<div class="in " style="left:542px;top:156px;width:136px;height:14px;"></div>
<div class="lb" style="left:394px;top:172px;width:148px;">ID fiscal federal unificado</div>
<div class="in " style="left:542px;top:172px;width:136px;height:14px;"></div>
<div class="lb" style="left:394px;top:202px;width:148px;height:29px">Comentarios</div>
<div class="in " style="left:542px;top:202px;width:136px;height:29px;"></div>
<div class="lb" style="left:394px;top:231px;width:148px;height:13px;background:#fefef7;border-top:1px solid #e3e8ee;line-height:13px;letter-spacing:-0.2px">Empleado del departamento de ventas</div>
<div class="in dd dd2" style="left:542px;top:232px;width:136px;height:12px;overflow:visible"><span style="display:block;width:123px;height:11px;line-height:11px;overflow:hidden">-Ningún empleado del depart</span></div>
<div class="lb" style="left:394px;top:245px;width:148px;">Responsable</div>
<div class="in dd" style="left:542px;top:245px;width:136px;height:14px;"></div>
<div class="lb" style="left:394px;top:275px;width:148px;">Código canal SN</div>
<div class="in " style="left:542px;top:275px;width:136px;height:14px;"></div>
<div class="lb" style="left:394px;top:290px;width:148px;">Técnico</div>
<div class="in " style="left:542px;top:290px;width:136px;height:14px;"></div>
<div class="lb" style="left:394px;top:305px;width:148px;">Territorio</div>
<div class="in " style="left:542px;top:305px;width:136px;height:14px;"></div>
<div class="lb" style="left:394px;top:320px;width:148px;">Idioma</div>
<div class="in dd" style="left:542px;top:320px;width:136px;height:14px;">Spanish (LA)</div>
<div class="lb" style="left:394px;top:395px;width:148px;">GLN</div>
<div class="in " style="left:542px;top:395px;width:136px;height:14px;"></div>
<svg class="a" style="left:283px;top:230px" width="12" height="12" viewBox="0 0 12 12"><circle cx="6" cy="6" r="5.300" fill="#e6e8f5" stroke="#aab1d3" stroke-width="1"/><path d="M4 4.500H8M4 6H8M4 7.500H8" stroke="#8a8c9c" stroke-width="0.700"/></svg>
<svg class="a" style="left:679px;top:231px" width="12" height="12" viewBox="0 0 12 12"><circle cx="6" cy="6" r="5.300" fill="#e6e8f5" stroke="#aab1d3" stroke-width="1"/><path d="M4 4.500H8M4 6H8M4 7.500H8" stroke="#8a8c9c" stroke-width="0.700"/></svg>
<svg class="a" style="left:679px;top:319px" width="12" height="12" viewBox="0 0 12 12"><circle cx="6" cy="6" r="5.300" fill="#e6e8f5" stroke="#aab1d3" stroke-width="1"/><path d="M4 4.500H8M4 6H8M4 7.500H8" stroke="#8a8c9c" stroke-width="0.700"/></svg>
<div class="a" style="left:397px;top:456px;width:12px;height:12px;background:#fff;border:1px solid #8a8a8a"></div>
<div class="t" style="left:414px;top:457px">Bloquear envío de contenido de marketing</div>
<div class="a ybtn" style="left:660px;top:455px;width:18px;height:14px"><i></i></div>
<div class="a" style="left:12px;top:473px;width:12px;height:12px;border-radius:50%;background:#fff;border:1px solid #858585"><div class="a" style="left:3px;top:3px;width:4px;height:4px;border-radius:50%;background:#222"></div></div>
<div class="t" style="left:29px;top:473px">Activo</div>
<div class="a" style="left:12px;top:488px;width:12px;height:12px;border-radius:50%;background:#fff;border:1px solid #858585"></div>
<div class="t" style="left:29px;top:488px">Inactivo</div>
<div class="a" style="left:12px;top:502px;width:12px;height:12px;border-radius:50%;background:#fff;border:1px solid #858585"></div>
<div class="t" style="left:29px;top:504px">Avanzado</div>
<div class="lb" style="left:164px;top:471px;width:43px;">Desde</div>
<div class="in " style="left:207px;top:471px;width:51px;height:14px;"></div>
<div class="lb" style="left:259px;top:471px;width:33px;">Hasta</div>
<div class="in " style="left:292px;top:471px;width:52px;height:14px;"></div>
<div class="lb" style="left:347px;top:471px;width:95px;">Comentarios</div>
<div class="in " style="left:452px;top:471px;width:136px;height:14px;"></div>
</div>
<div class="a" style="left:1182px;top:115px;width:18px;height:509px;background:#f5f5f3;border-left:1px solid #cfcfc6;border-right:1px solid #cfcfc6;border-bottom:1px solid #cfcfc6"></div>
<div class="a" style="left:1207px;top:85px;width:2px;height:547px;background:#e4e4e4"></div>
<div class="a" style="left:1184px;top:117px;width:14px;height:14px;background:#e4e4e4"><div class="a" style="left:3px;top:4px;border-left:4px solid transparent;border-right:4px solid transparent;border-bottom:4.5px solid #555"></div></div>
<div class="a" style="left:1184px;top:131px;width:14px;height:420px;background:#e0e0e0;border:1px solid #a9a9a9"></div>
<div class="a" style="left:1184px;top:608px;width:14px;height:14px;background:#e4e4e4"><div class="a" style="left:3px;top:5.500px;border-left:4px solid transparent;border-right:4px solid transparent;border-top:4.5px solid #555"></div></div>
<svg class="a" style="left:1187px;top:337px" width="8" height="10" viewBox="0 0 8 10"><g fill="#fbfbfb"><rect x="1" y="1" width="2" height="2"/><rect x="5" y="1" width="2" height="2"/><rect x="1" y="4" width="2" height="2"/><rect x="5" y="4" width="2" height="2"/><rect x="1" y="7" width="2" height="2"/><rect x="5" y="7" width="2" height="2"/></g></svg>
<!-- right.html -->
<div class="a" style="left:1209px;top:85px;width:63px;height:546px;background:#fdfdfd;border:1px solid #ababab;border-right:none"></div>
<div class="a" style="left:1212px;top:88px;width:60px;height:537px;background:#efefef"></div>
<div class="a" style="left:1214px;top:91px;width:58px;height:534px;background:#fffdee;overflow:hidden">
<div class="rp" style="left:7px;top:0px">Apellido materno</div>
<div class="rp" style="left:7px;top:16px">Apellido paterno</div>
<div class="rp" style="left:7px;top:32px">Acreedor tributario</div>
<div class="rp" style="left:7px;top:48px">Segundo nombre</div>
<div class="rp" style="left:7px;top:64px">Tipo de persona</div>
<div class="rp" style="left:7px;top:80px">Nombres</div>
<div class="rp" style="left:7px;top:96px">Tipo de documento</div>
<div class="rp" style="left:7px;top:112px;letter-spacing:0.35px">SN Relacionado</div>
<div class="rp" style="left:7px;top:128px">Es Empleado</div>
<div class="rp" style="left:7px;top:144px">Aval 1</div>
<div class="rp" style="left:7px;top:160px">Impto.Selectivo</div>
<div class="rp" style="left:7px;top:176px">Aval 2</div>
<div class="rp" style="left:7px;top:192px;letter-spacing:0.35px">MIMSA</div>
<div class="rp" style="left:7px;top:208px;letter-spacing:0.35px">RUMI</div>
<div class="rp" style="left:7px;top:224px;letter-spacing:0.35px">INDUZINC</div>
<div class="rp" style="left:7px;top:240px;letter-spacing:0.35px">MEGA</div>
<div class="rp" style="left:7px;top:256px">Habido</div>
<div class="rp" style="left:7px;top:272px;letter-spacing:0.35px">MIMSA-G/R</div>
<div class="rp" style="left:7px;top:288px;letter-spacing:0.35px">RUMI-G/R</div>
<div class="rp" style="left:7px;top:304px;letter-spacing:0.35px">MEGA-G/R</div>
<div class="rp" style="left:7px;top:320px;letter-spacing:0.35px">INDUZINC-G/R</div>
<div class="rp" style="left:7px;top:336px;letter-spacing:0.35px">MIMSA-OV</div>
<div class="rp" style="left:7px;top:352px;letter-spacing:0.35px">RUMI-OV</div>
<div class="rp" style="left:7px;top:368px;letter-spacing:0.35px">MEGA-OV</div>
<div class="rp" style="left:7px;top:384px;letter-spacing:0.35px">INDUZINC-OV</div>
<div class="rp" style="left:7px;top:400px;letter-spacing:0.35px">BCP: Tipo de registro</div>
<div class="rp" style="left:7px;top:416px;letter-spacing:0.35px">BCP: Tipo de cuenta</div>
<div class="rp" style="left:7px;top:432px;letter-spacing:0.35px">BCP: Validacion</div>
<div class="rp" style="left:7px;top:448px">Banco</div>
<div class="rp" style="left:7px;top:462px;height:30px;line-height:19px">Cuenta CTI</div>
<div class="rp" style="left:7px;top:492px;height:30px;line-height:19px">Direccion Adicional</div>
<div class="rp" style="left:7px;top:522px;height:30px;line-height:19px">Documento</div>
</div>
<!-- status.html -->
<div class="a" style="left:5px;top:632px;width:1267px;height:1px;background:#c8c8c8"></div>
<div class="a" style="left:5px;top:633px;width:1267px;height:3px;background:#fdfdfd"></div>
<div class="a" style="left:5px;top:636px;width:1267px;height:39px;background:linear-gradient(#d8d8d8 0,#dcdcdc 3px,#ececec 8px,#f7f7f7 13px,#fcfcfc 17px,#fdfdfd 100%)"></div>
<div class="a" style="left:5px;top:673px;width:1267px;height:1px;background:#e9edf3"></div>
<div class="a" style="left:541px;top:640px;width:86px;height:32px;background:linear-gradient(90deg,rgba(255,255,255,0),#fff 20%,#fff 80%,rgba(255,255,255,0))"></div>
<div class="sb" style="left:13px;top:640px;width:528px"></div>
<div class="sb" style="left:627px;top:640px;width:264px"></div>
<div class="sb" style="left:895px;top:640px;width:260px"></div>
<div class="sb" style="left:13px;top:657px;width:528px"></div>
<div class="sb" style="left:627px;top:657px;width:264px"></div>
<div class="sb" style="left:895px;top:657px;width:260px"></div>
<div class="t" style="left:541px;top:640px;width:86px;text-align:center;line-height:13px"><span class="n" style="letter-spacing:-0.35px">21/05/2021</span></div>
<div class="t" style="left:541px;top:658px;width:86px;text-align:center;line-height:13px"><span class="n" style="letter-spacing:-0.35px">13:55</span></div>
<div class="a" style="left:1177px;top:641px;height:26px;font-family:Liberation Sans,sans-serif;font-weight:bold;font-size:23px;line-height:26px;color:#9b9b9b;letter-spacing:-2.9px;-webkit-text-stroke:0.7px #9b9b9b;white-space:nowrap">SAP</div>
<div class="a" style="left:1219px;top:642.5px;font-family:Liberation Sans,sans-serif;font-size:8.4px;line-height:10px;color:#a4a4a4;white-space:nowrap">Business</div>
<div class="a" style="left:1218px;top:649.5px;font-family:Liberation Sans,sans-serif;font-weight:bold;font-size:14px;line-height:15px;color:#f0a91f;white-space:nowrap">One</div>
<svg class="a" style="left:1262px;top:662px" width="10" height="10" viewBox="0 0 10 10"><g fill="#6a6a6a"><rect x="0" y="8" width="1" height="1"/><rect x="2" y="6" width="1" height="1"/><rect x="2" y="8" width="1" height="1"/><rect x="4" y="4" width="1" height="1"/><rect x="4" y="6" width="1" height="1"/><rect x="4" y="8" width="1" height="1"/><rect x="6" y="2" width="1" height="1"/><rect x="6" y="4" width="1" height="1"/><rect x="6" y="6" width="1" height="1"/><rect x="6" y="8" width="1" height="1"/><rect x="8" y="0" width="1" height="1"/><rect x="8" y="2" width="1" height="1"/><rect x="8" y="4" width="1" height="1"/><rect x="8" y="6" width="1" height="1"/><rect x="8" y="8" width="1" height="1"/></g></svg>
<!-- annot.html -->
<!-- annotation overlays -->
<div class="hb" style="left:16px;top:293px;width:208px;height:23px"></div>
<div class="hb" style="left:49px;top:321px;width:220px;height:20px"></div>
<div class="hb" style="left:502px;top:194px;width:128px;height:19px"></div>
<div class="hb" style="left:648px;top:193px;width:24px;height:21px"></div>
<div class="a ybtn" style="left:651px;top:197px;width:15px;height:14px"><i style="left:3.500px;top:7.500px"></i></div>
<svg class="a" style="left:620px;top:110px" width="280" height="130" viewBox="620 110 280 130">
<path d="M695.5 163.5L637.5 195.5L741.5 163.5Z" fill="#fff" stroke="#0a62ad" stroke-width="1.4"/>
<rect x="678.5" y="120.5" width="183" height="43.5" rx="9" ry="9" fill="#fff" stroke="#0a62ad" stroke-width="3"/>
<path d="M697 162.3L741 162.3" stroke="#fff" stroke-width="2.6"/>
<path d="M775.5 203L690 224.5L778 212Z" fill="#fff" stroke="#0a62ad" stroke-width="1.4"/>
<rect x="775" y="180" width="107.5" height="32" rx="7" ry="7" fill="#fff" stroke="#0a62ad" stroke-width="3"/>
<path d="M776.3 204L776.3 209.5" stroke="#fff" stroke-width="2.6"/>
<text x="769.5" y="146.2" text-anchor="middle" font-family="Liberation Sans, sans-serif" font-weight="bold" font-size="14.67" letter-spacing="0.1" fill="#0a62ad">Digitar un ruc valido</text>
<text x="828" y="199.8" text-anchor="middle" font-family="Liberation Sans, sans-serif" font-weight="bold" font-size="14.67" fill="#0a62ad">Clic en boton</text>
</svg>
<div class="circ" style="left:206px;top:280px">1</div>
<div class="circ" style="left:253px;top:310px">2</div>
<div class="circ" style="left:610px;top:183px">3</div>
<div class="circ" style="left:663px;top:203px">4</div>
</body></html>
